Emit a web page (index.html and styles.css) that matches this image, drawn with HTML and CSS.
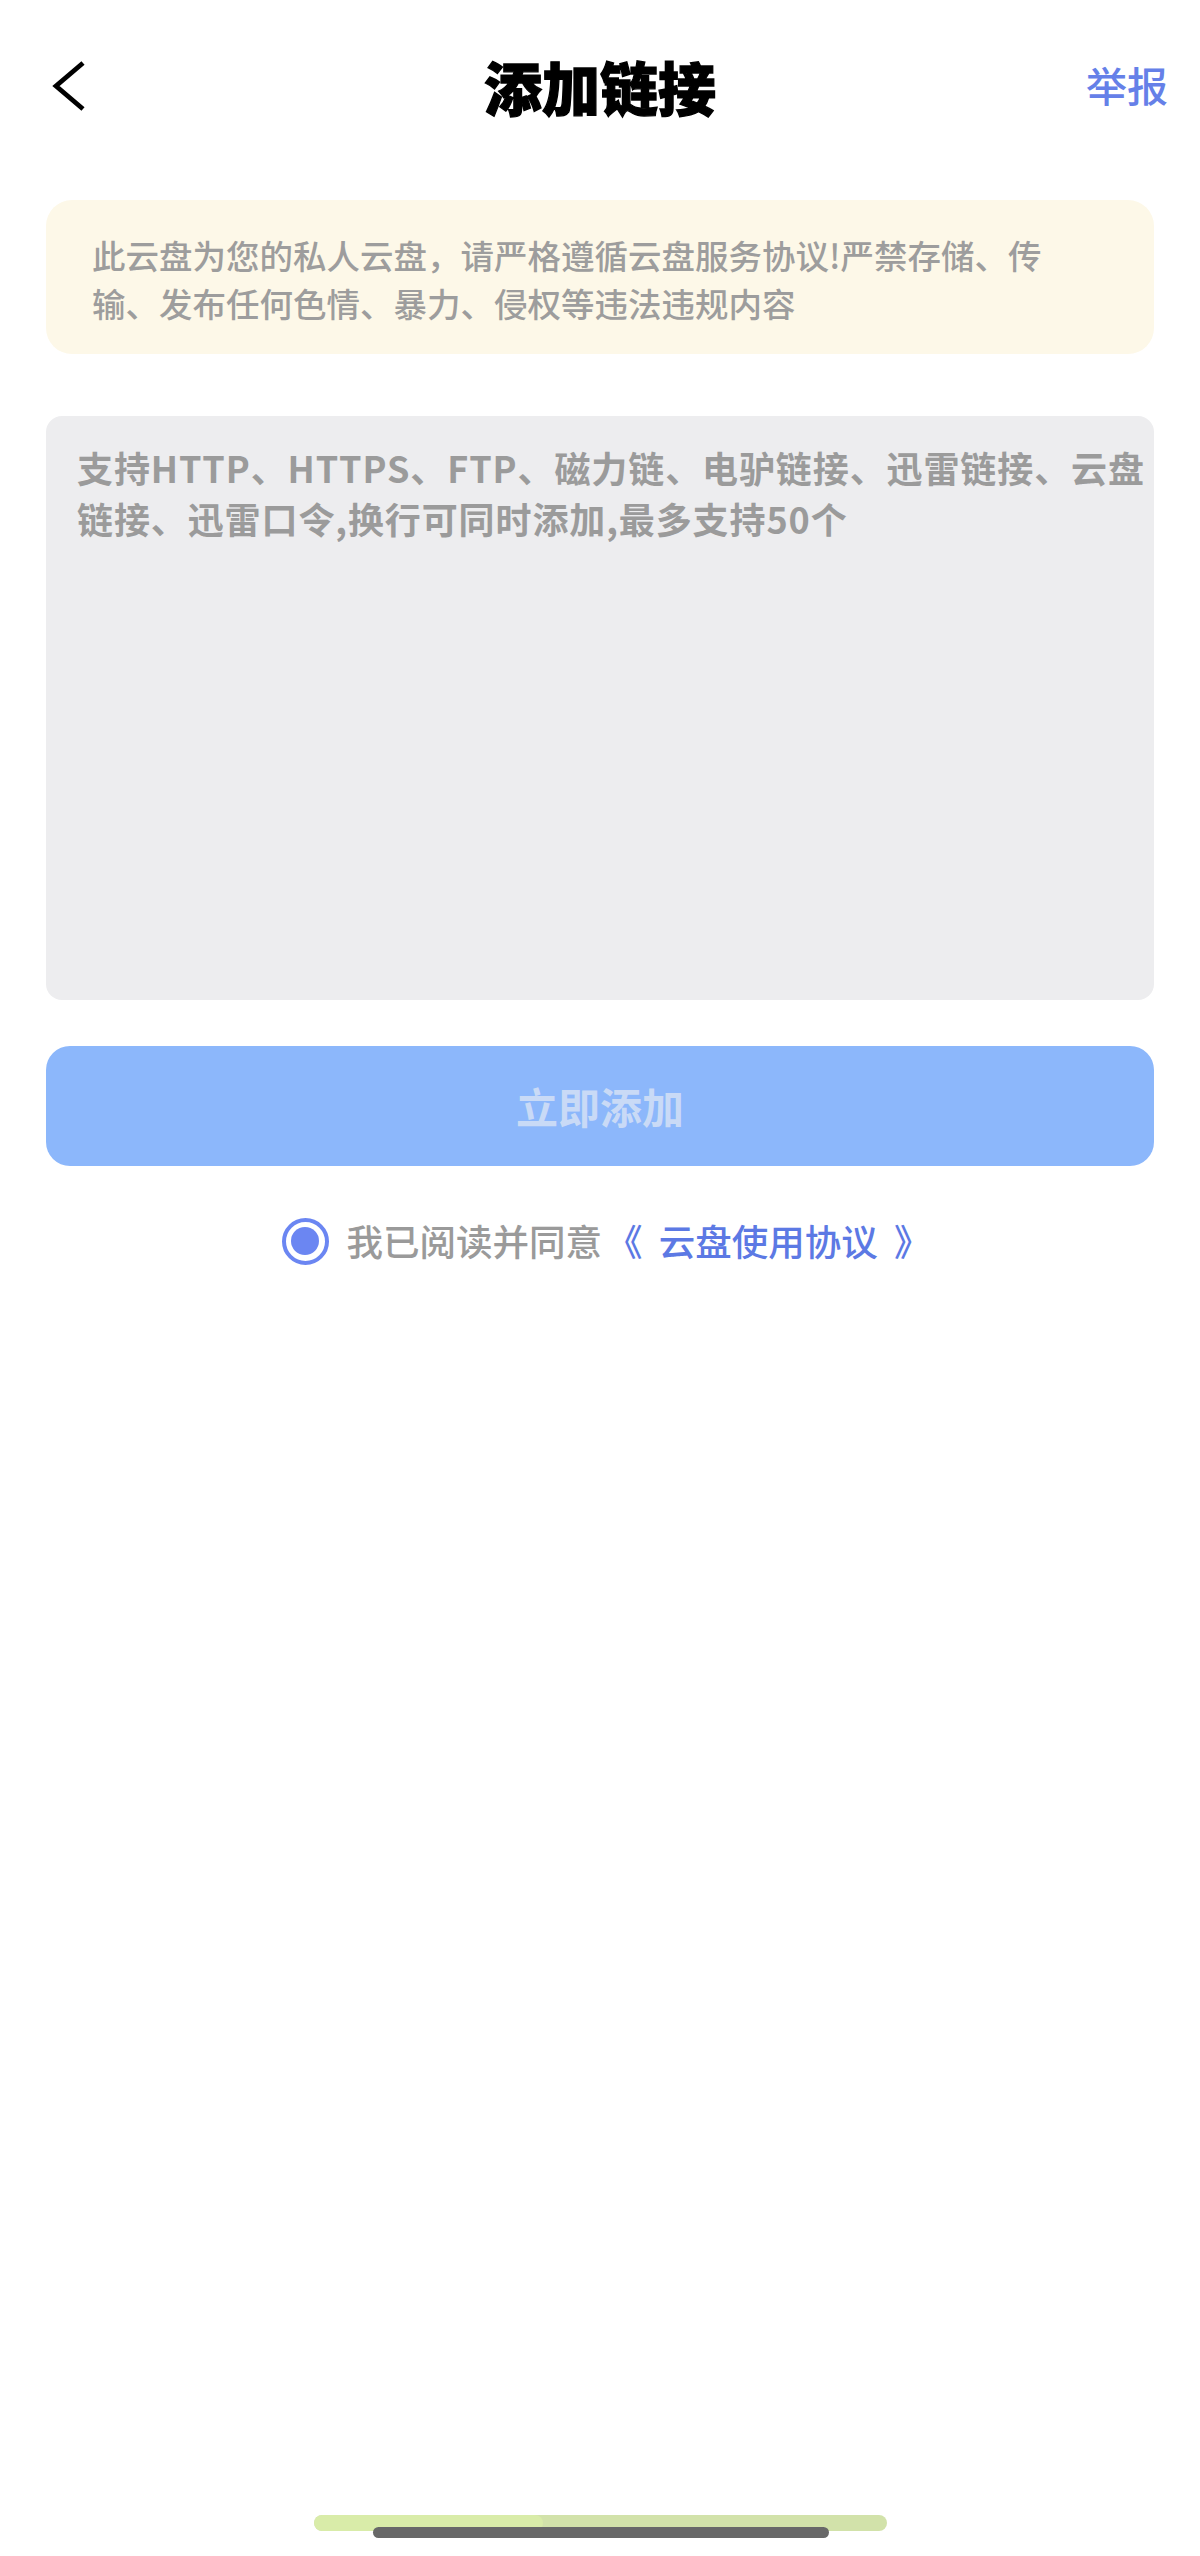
FILE: index.html
```html
<!DOCTYPE html>
<html lang="zh-CN">
<head>
<meta charset="utf-8">
<title>添加链接</title>
<link rel="stylesheet" href="styles.css">
</head>
<body>
<div class="page">
  <header class="nav">
    <div class="nav-left">
      <svg class="back" width="36" height="52" viewBox="0 0 36 52" aria-hidden="true">
        <polyline points="31,3 4,26 31,49" fill="none" stroke="#000" stroke-width="4.8" stroke-linecap="butt" stroke-linejoin="miter"/>
      </svg>
    </div>
    <h1 class="nav-title">添加链接</h1>
    <div class="nav-right">举报</div>
  </header>

  <section class="notice">
    此云盘为您的私人云盘，请严格遵循云盘服务协议!严禁存储、传输、发布任何色情、暴力、侵权等违法违规内容
  </section>

  <section class="input-box">
    <div class="placeholder">支持HTTP、HTTPS、FTP、磁力链、电驴链接、迅雷链接、云盘<br>链接、迅雷口令,换行可同时添加,最多支持50个</div>
  </section>

  <button class="submit">立即添加</button>

  <div class="agree">
    <span class="radio"><span class="radio-dot"></span></span>
    <span class="agree-text">我已阅读并同意</span><span class="agree-link">《 云盘使用协议 》</span>
  </div>

  <div class="home">
    <div class="home-bar">
      <span class="home-bar-light"></span>
    </div>
    <span class="home-indicator"></span>
  </div>
</div>
</body>
</html>
```
FILE: styles.css
```css
* {
  box-sizing: border-box;
}

html, body {
  margin: 0;
  padding: 0;
  background: #ffffff;
}

body {
  font-family: "Noto Sans CJK SC", "Noto Sans", sans-serif;
  color: #000;
}

.page {
  width: 1200px;
  height: 2556px;
  display: flex;
  flex-direction: column;
  align-items: center;
  padding-bottom: 18px;
}

/* header */
.nav {
  width: 100%;
  height: 172px;
  display: grid;
  grid-template-columns: 1fr auto 1fr;
  align-items: center;
  padding: 0 32px;
}

.nav-left {
  display: flex;
  align-items: center;
  padding-left: 20px;
}

.back {
  display: block;
}

.nav-title {
  margin: 0;
  font-size: 58px;
  font-weight: 900;
  line-height: 1;
  color: #000;
  -webkit-text-stroke: 1.3px #000;
}

.nav-right {
  justify-self: end;
  font-size: 41px;
  font-weight: 500;
  line-height: 1;
  color: #6580e8;
  margin-top: -4px;
}

/* notice */
.notice {
  margin-top: 28px;
  width: 1108px;
  background: #fdf8e8;
  border-radius: 26px;
  padding: 31px 94px 27px 46px;
  font-size: 33.5px;
  line-height: 48px;
  color: #9d9d9d;
  font-weight: 500;
}

/* input */
.input-box {
  margin-top: 62px;
  width: 1108px;
  height: 584px;
  background: #ededef;
  border-radius: 16px;
  padding: 26px 4px 0 31px;
}

.placeholder {
  font-size: 36px;
  line-height: 51px;
  font-weight: 700;
  color: #9b9b9b;
  letter-spacing: 0.9px;
  white-space: nowrap;
}

/* button */
.submit {
  margin-top: 46px;
  width: 1108px;
  height: 120px;
  border: none;
  border-radius: 24px;
  background: #8cb7fb;
  color: #c9daf6;
  font-family: inherit;
  font-size: 42px;
  font-weight: 700;
  line-height: 1;
  padding: 0;
}

/* agreement */
.agree {
  margin-top: 51px;
  display: flex;
  align-items: center;
  height: 48px;
  padding-left: 12px;
}

.radio {
  width: 47px;
  height: 47px;
  border-radius: 50%;
  border: 4.5px solid #6b86f2;
  display: flex;
  align-items: center;
  justify-content: center;
  margin-right: 18px;
}

.radio-dot {
  width: 28px;
  height: 28px;
  border-radius: 50%;
  background: #6b86f2;
}

.agree-text {
  font-size: 36.5px;
  line-height: 1;
  color: #9a9a9a;
  font-weight: 500;
}

.agree-link {
  font-size: 36.5px;
  line-height: 1;
  color: #5c79e4;
  font-weight: 500;
  word-spacing: 8px;
  margin-left: 4px;
}

/* home indicator */
.home {
  margin-top: auto;
  position: relative;
  width: 573px;
  height: 23px;
}

.home-bar {
  width: 573px;
  height: 16px;
  border-radius: 8px;
  background: #d2e2aa;
  overflow: hidden;
}

.home-bar-light {
  display: block;
  width: 229px;
  height: 16px;
  border-radius: 8px;
  background: #d9eca9;
}

.home-indicator {
  position: absolute;
  left: 59px;
  top: 12px;
  width: 456px;
  height: 11px;
  border-radius: 6px;
  background: #686868;
}
```
